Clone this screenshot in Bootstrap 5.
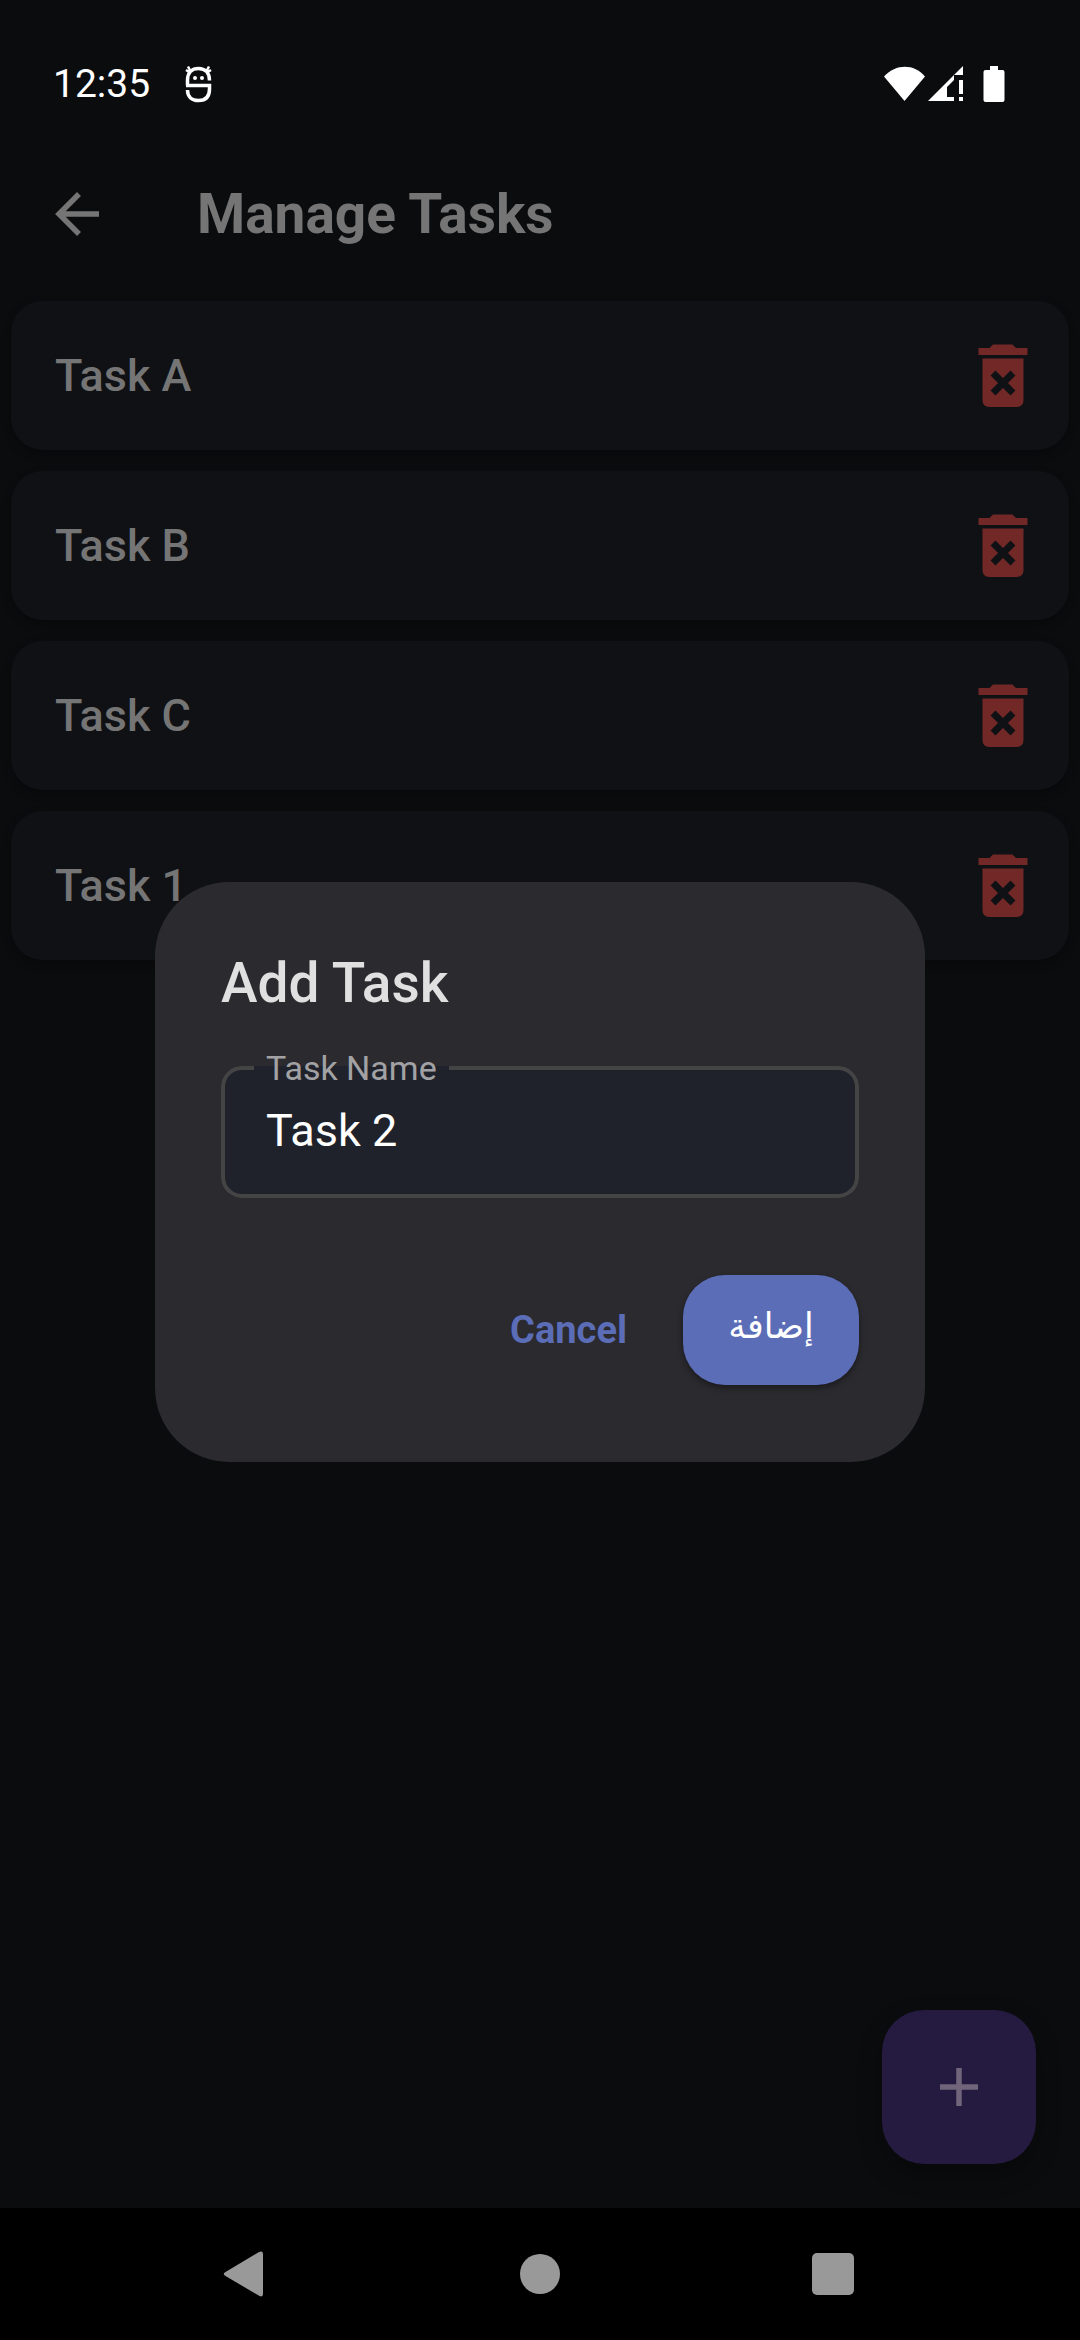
<!DOCTYPE html>
<html lang="en" data-bs-theme="dark">
<head>
<meta charset="utf-8">
<meta name="viewport" content="width=device-width, initial-scale=1">
<title>Manage Tasks</title>
<link href="https://cdn.jsdelivr.net/npm/bootstrap@5.3.0/dist/css/bootstrap.min.css" rel="stylesheet">
<style>
  body { background: #0b0c0e; color: #757575; font-family: Roboto, "DejaVu Sans", sans-serif; }
  svg { display: block; flex: none; }
  .status-bar { height: 140px; padding: 28px 75px 0 53px; color: #fff; font-size: 39px; line-height: 56px; }
  .status-app { margin-left: 35px; }
  .status-battery { margin-left: 19px; }
  .top-bar { height: 147px; padding: 0 53px; gap: 96px; }
  .top-bar h1 { font-size: 55px; line-height: 70px; font-weight: 700; color: #757575; }
  .back-link { color: inherit; }
  .task-list { padding: 14px 11px; gap: 21px; }
  .task-card { height: 149px; padding: 0 24px 0 44px; background: #101114; border-radius: 32px; font-size: 45px; line-height: 60px; font-weight: 500; box-shadow: 0 4px 10px rgba(0, 0, 0, .3); }
  .icon-btn { color: #732828; }
  .add-fab { margin: 44px; width: 154px; height: 154px; border-radius: 42px; background: #251a40; color: #70657a; box-shadow: 0 10px 24px rgba(0, 0, 0, .3); }
  .system-nav { height: 132px; background: #000; color: #999; }
  .system-nav .btn { width: 293px; color: inherit; }
  .dialog-layer { padding: 136px 155px 132px; }
  .dialog-box { padding: 66px 66px 77px; background: #2b2a2f; border-radius: 74px; }
  .dialog-box h2 { font-size: 55px; line-height: 70px; font-weight: 500; margin-bottom: 30px; color: #e0e0e0; }
  .outlined { border: 4px solid #444; border-radius: 21px; background: #20222b; }
  .outlined legend { float: none; width: auto; margin: 0 0 0 29px; padding: 0 12px; font-size: 34px; line-height: 40px; color: #a2a2a5; }
  .outlined label { display: block; }
  .outlined input { height: 106px; padding: 0 41px 22px; font-size: 45px; line-height: 60px; color: #fff; outline: 0; }
  .dialog-actions { margin-top: 77px; gap: 24px; }
  .dialog-actions .btn { height: 110px; padding: 0 32px; font-size: 38px; line-height: 50px; }
  .dialog-actions .cancel-btn { color: #5c6db8; font-weight: 700; }
  .dialog-actions .confirm-btn { min-width: 176px; padding-bottom: 6px; border-radius: 42px; background: #5c6db8; color: #fff; font-size: 35px; font-weight: 500; box-shadow: 0 3px 6px rgba(0, 0, 0, .4); }
</style>
</head>
<body class="min-vh-100 d-flex flex-column">
  <div class="status-bar d-flex align-items-center">
    <div class="d-flex align-items-center flex-grow-1">
      <span>12:35</span>
      <svg class="status-app" width="27" height="38" viewBox="0 0 27 38" fill="none" stroke="currentColor" stroke-width="3.500" aria-hidden="true">
        <path d="M2.500 20.500V15C2.500 7.500 7 3.500 13.500 3.500S24.500 7.500 24.500 15.500M1 20.500H24.500V24C24.500 32 20 35.500 13.500 35.500S2.500 32 2.500 25"/>
        <path d="M3 1.500L6 7M24 1.500L21 7M1 5L5 7.500M26 5L22 7.500" stroke-width="2.500"/>
        <g fill="currentColor" stroke="none"><circle cx="10" cy="13" r="2"/><circle cx="17" cy="13" r="2"/></g>
      </svg>
    </div>
    <div class="d-flex align-items-center">
      <svg width="80" height="36" viewBox="0 0 80 36" fill="currentColor" aria-hidden="true">
        <path d="M0 10.500C12 -2.500 30 -2.500 41 10.500L20.500 35Z"/>
        <path d="M44 35L79 0V9H70V14L63 21V31H70V35ZM75 14H79V28H75ZM75 31H79V35H75Z"/>
      </svg>
      <svg class="status-battery" width="22" height="36" viewBox="0 0 22 36" fill="currentColor" aria-hidden="true">
        <path d="M7 0H15V4H19.500Q21.500 4 21.500 6V34Q21.500 36 19.500 36H2.500Q.5 36 .5 34V6Q.5 4 2.500 4H7Z"/>
      </svg>
    </div>
  </div>

  <header class="top-bar d-flex align-items-center">
    <a class="back-link" href="#" aria-label="Back">
      <svg width="48" height="48" viewBox="0 0 48 48" fill="none" stroke="currentColor" stroke-width="5.500" aria-hidden="true"><path d="M46 24H7M26 4L6 24L26 44"/></svg>
    </a>
    <h1 class="m-0">Manage Tasks</h1>
  </header>

  <svg width="0" height="0" class="position-absolute" aria-hidden="true">
    <symbol id="trash" viewBox="0 0 84 84">
      <path fill="currentColor" d="M17.500 14H28.500L32 10.500H51.500L55 14H66.500V21H17.500ZM21.500 24.500H62.500V66Q62.500 73 55.500 73H28.500Q21.500 73 21.500 66Z"/>
      <path stroke="#101114" stroke-width="7" d="M32 39L52 59M52 39L32 59"/>
    </symbol>
  </svg>

  <main class="flex-grow-1 d-flex flex-column">
    <ul class="task-list list-unstyled d-flex flex-column m-0">
      <li class="task-card d-flex align-items-center justify-content-between"><span>Task A</span><button type="button" class="icon-btn btn border-0 p-0" aria-label="Delete Task A"><svg width="84" height="84"><use href="#trash"/></svg></button></li>
      <li class="task-card d-flex align-items-center justify-content-between"><span>Task B</span><button type="button" class="icon-btn btn border-0 p-0" aria-label="Delete Task B"><svg width="84" height="84"><use href="#trash"/></svg></button></li>
      <li class="task-card d-flex align-items-center justify-content-between"><span>Task C</span><button type="button" class="icon-btn btn border-0 p-0" aria-label="Delete Task C"><svg width="84" height="84"><use href="#trash"/></svg></button></li>
      <li class="task-card d-flex align-items-center justify-content-between"><span>Task 1</span><button type="button" class="icon-btn btn border-0 p-0" aria-label="Delete Task 1"><svg width="84" height="84"><use href="#trash"/></svg></button></li>
    </ul>
    <button type="button" class="add-fab btn border-0 p-0 mt-auto ms-auto d-flex align-items-center justify-content-center" aria-label="Add task">
      <svg width="40" height="40" viewBox="0 0 40 40" stroke="currentColor" stroke-width="5.500" aria-hidden="true"><path d="M20 1V39M1 20H39"/></svg>
    </button>
  </main>

  <nav class="system-nav d-flex justify-content-center" aria-label="System">
    <button type="button" class="btn border-0 p-0 d-flex align-items-center justify-content-center" aria-label="Back">
      <svg width="48" height="48" viewBox="0 0 48 48" fill="currentColor"><path d="M2.500 22L36 2Q40 .5 40 4V44Q40 47.500 36.500 46L2.500 26Q-1 24 2.500 22Z"/></svg>
    </button>
    <button type="button" class="btn border-0 p-0 d-flex align-items-center justify-content-center" aria-label="Home">
      <svg width="40" height="40" viewBox="0 0 40 40" fill="currentColor"><circle cx="20" cy="20" r="20"/></svg>
    </button>
    <button type="button" class="btn border-0 p-0 d-flex align-items-center justify-content-center" aria-label="Recent apps">
      <svg width="42" height="42" viewBox="0 0 42 42" fill="currentColor"><rect width="42" height="42" rx="5"/></svg>
    </button>
  </nav>

  <div class="dialog-layer position-fixed top-0 start-0 w-100 h-100 d-flex align-items-center">
    <form class="dialog-box w-100" role="dialog" aria-labelledby="dialog-title">
      <h2 id="dialog-title">Add Task</h2>
      <fieldset class="outlined">
        <legend><label for="task-name">Task Name</label></legend>
        <input class="d-block w-100 border-0 bg-transparent" id="task-name" type="text" value="Task 2">
      </fieldset>
      <div class="dialog-actions d-flex justify-content-end">
        <button type="button" class="cancel-btn btn border-0">Cancel</button>
        <button type="submit" class="confirm-btn btn border-0" lang="ar" dir="rtl">إضافة</button>
      </div>
    </form>
  </div>
<script src="https://cdn.jsdelivr.net/npm/bootstrap@5.3.0/dist/js/bootstrap.bundle.min.js"></script>
</body>
</html>
